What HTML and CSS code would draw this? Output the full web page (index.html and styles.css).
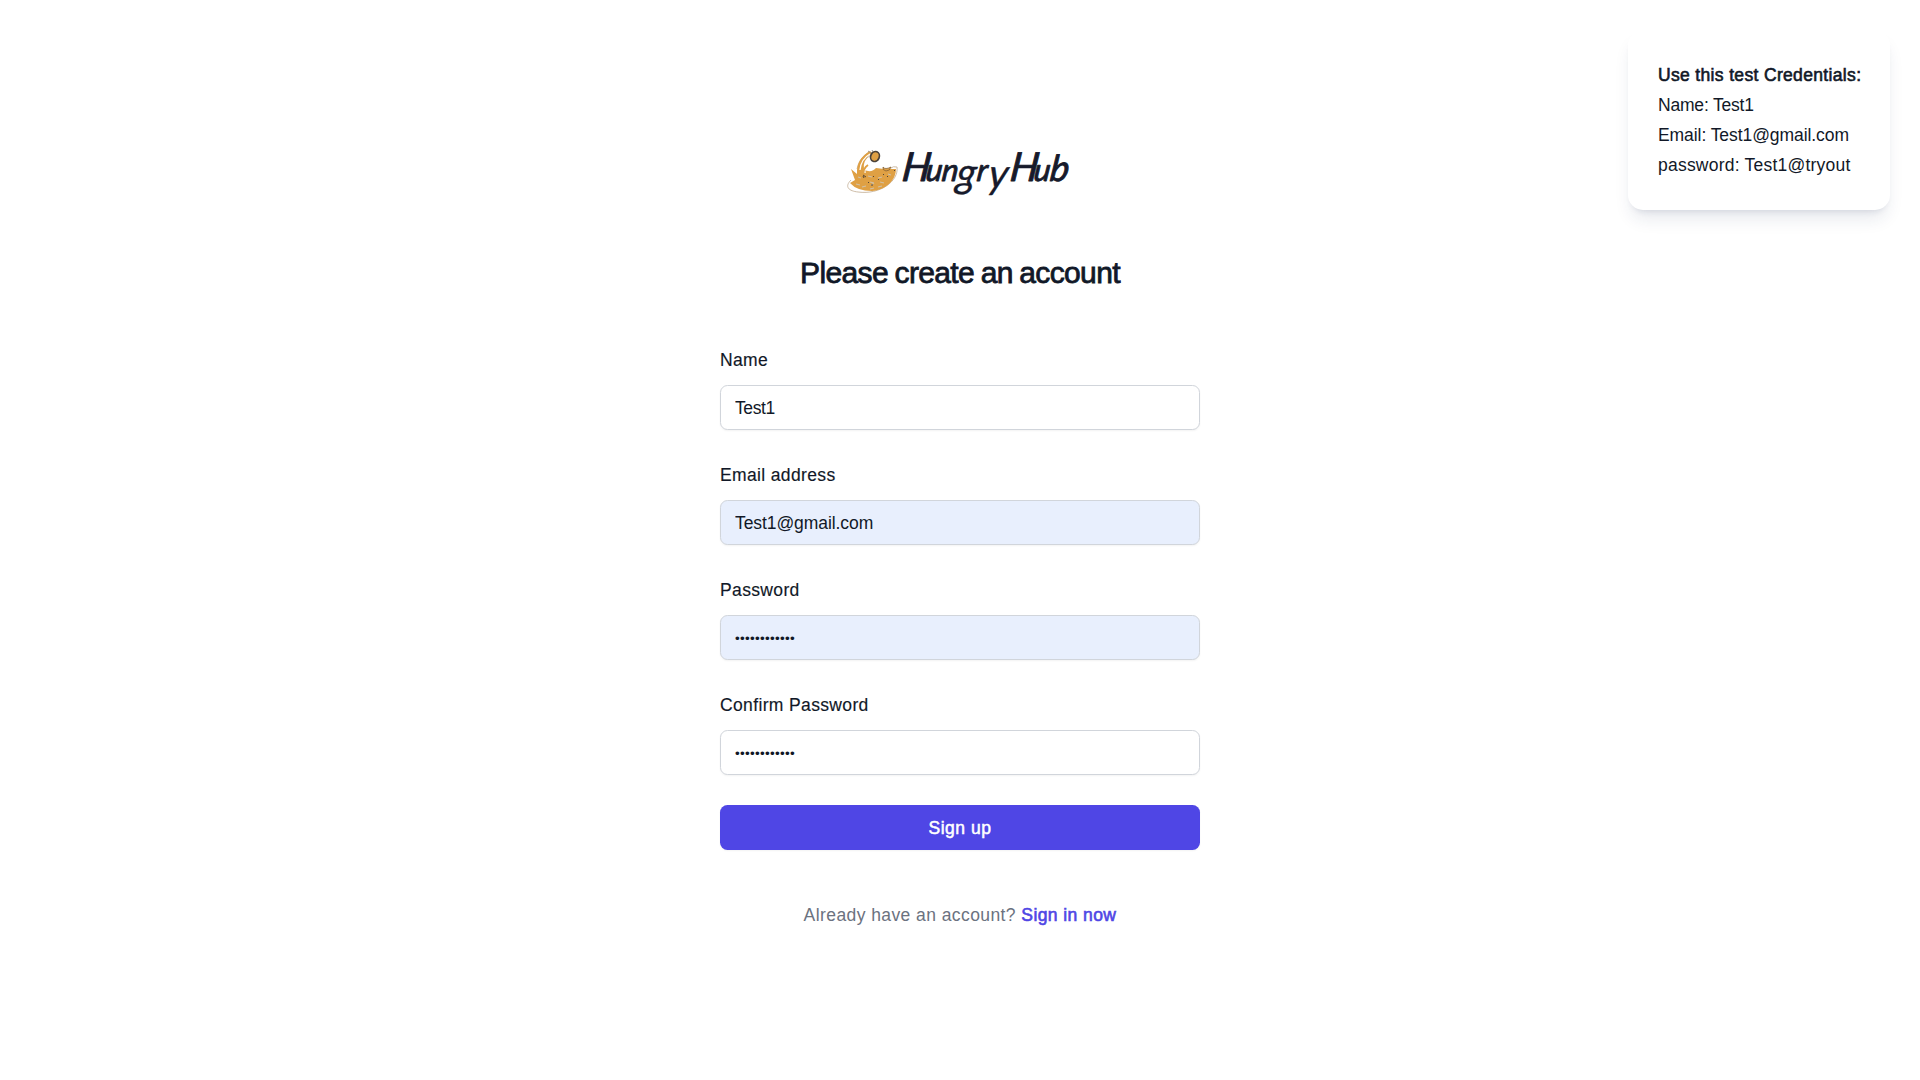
FILE: index.html
```html
<!DOCTYPE html>
<html lang="en">
<head>
<meta charset="utf-8">
<title>HungryHub</title>
<link rel="stylesheet" href="styles.css">
</head>
<body>
<main class="page">
  <svg class="logo" viewBox="840 140 240 70" role="img" aria-label="HungryHub">
    <g fill="none" stroke="#c7b49d" stroke-width=".9">
      <path d="M851 180C844 187 849 191 858 192C880 195 899 181 897 167Q893 166 891 168"/>
      <path d="M857 169Q859 158 869 152M861 171Q862 160 871 155"/>
    </g>
    <path fill="#dfa044" d="M851 169L857 174Q856 159 870 151L872 153Q862 160 864 170Q872 173 876 168L884 169L896 169C896 180 886 190 872 191Q857 191 850 183L855 180Z"/>
    <path d="M860 170Q861 159 870 154M865 173Q864 166 868 164" fill="none" stroke="#fff" stroke-width="1.3"/>
    <path d="M863 176Q863 168 868 165" fill="none" stroke="#dfa044" stroke-width="2"/>
    <path d="M883 167Q885 170 891 167Q890 171 886 171Q882 170 883 167Z" fill="#dfa044" stroke="#7b5a32" stroke-width=".7"/>
    <ellipse cx="875" cy="156.500" rx="4.300" ry="5.100" transform="rotate(22 875 156.500)" fill="#dfa044" stroke="#4c4238" stroke-width="1.700"/>
    <path d="M868 151l3 2m1-3l1 2" stroke="#958b7f" stroke-width=".9"/>
    <path d="M856 184l4 1m2 2l4-1m4 3l4-1m4-1l4-1m-11-1l3-2m6-1l4 1m-16-7l4 1m6 1l4-1m-24 0l3 1m27-4l3 1m-21 7l4 1" stroke="#d1c1a7" stroke-width="1.100"/>
    <path d="M863 175l3 2m7-1l1 1m9-3l1 1m-16 7l1 1m9-4l1 1m-8 5l2 0m14-9l1 1m-25-1l1 2m30-8l1 1" stroke="#514437" stroke-width="1"/>
    <g class="wordmark" transform="translate(0 181) skewX(-7)">
      <text><tspan class="tall" x="901">H</tspan><tspan x="925">u</tspan><tspan x="941">n</tspan><tspan class="tail" x="956" y="6">g</tspan><tspan x="976" y="0">r</tspan><tspan class="tail" x="988" y="7">y</tspan><tspan class="tall" x="1009" y="0">H</tspan><tspan x="1033">u</tspan><tspan class="b" x="1049">b</tspan></text>
    </g>
  </svg>
  <h1 class="title">Please create an account</h1>
  <form class="form">
    <label class="field"><span class="label name">Name</span><input class="input short" type="text" value="Test1"></label>
    <label class="field"><span class="label">Email address</span><input class="input filled" type="text" value="Test1@gmail.com"></label>
    <label class="field"><span class="label">Password</span><input class="input filled secret" type="password" value="Test1@tryout"></label>
    <label class="field"><span class="label">Confirm Password</span><input class="input secret" type="password" value="Test1@tryout"></label>
    <button class="submit" type="button">Sign up</button>
  </form>
  <p class="signin">Already have an account? <a class="link" href="#">Sign in now</a></p>
</main>
<aside class="credentials">
  <strong class="heading">Use this test Credentials:</strong>
  <span class="user">Name: Test1</span>
  <span class="email">Email: Test1@gmail.com</span>
  <span class="pass">password: Test1@tryout</span>
</aside>
</body>
</html>
```
FILE: styles.css
```css
* { box-sizing: border-box; }
body {
  margin: 0;
  background: #fff;
  color: #111827;
  font: 17.5px/30px "Liberation Sans", Arial, sans-serif;
}
.page {
  display: flex;
  flex-direction: column;
  align-items: center;
  width: 480px;
  margin: 0 auto;
  padding-top: 140px;
}
.logo { display: block; width: 240px; height: 70px; }
.wordmark { fill: #171a2b; stroke: #171a2b; stroke-width: .9px; stroke-linejoin: round; font: italic 31px Lato, sans-serif; }
.tall { font-size: 40px; }
.tail { font-size: 41px; stroke-width: .3px; }
.b { font-size: 36px; }
.title {
  margin: 40px 0 0;
  font-size: 30px;
  font-weight: 400;
  line-height: 45px;
  letter-spacing: -.63px;
  word-spacing: -1.2px;
  white-space: nowrap;
  -webkit-text-stroke: .8px;
}
.form { display: flex; flex-direction: column; gap: 30px; width: 100%; margin-top: 50px; }
.field { display: flex; flex-direction: column; gap: 10px; }
.label { letter-spacing: .36px; -webkit-text-stroke: .15px; }
.input {
  width: 100%;
  height: 45px;
  padding: 2px 14px 0;
  border: 1px solid #d1d5db;
  border-radius: 7.5px;
  outline: 0;
  background: #fff;
  box-shadow: 0 1px 2px rgba(0, 0, 0, .05);
  color: #111827;
  font: inherit;
  letter-spacing: -.08px;
}
.short { letter-spacing: -.4px; }
.filled { background: #e8effd; }
.secret { font-size: 13.5px; letter-spacing: .28px; padding-top: 1px; }
.submit {
  height: 45px;
  padding: 0;
  border: 0;
  border-radius: 7.5px;
  background: #4f46e5;
  box-shadow: 0 1px 2px rgba(0, 0, 0, .05);
  color: #fff;
  font: inherit;
  letter-spacing: .5px;
  -webkit-text-stroke: .5px;
}
.signin { margin: 50px 0 0; color: #6b7280; letter-spacing: .42px; white-space: nowrap; }
.link { color: #4f46e5; text-decoration: none; -webkit-text-stroke: .6px; }
.credentials {
  position: absolute;
  top: 30px;
  right: 30px;
  display: flex;
  flex-direction: column;
  width: 262px;
  padding: 30px;
  border-radius: 15px;
  background: #fff;
  box-shadow: 0 12px 18px -4px rgba(30, 41, 90, .11), 0 5px 7px -5px rgba(30, 41, 90, .16);
  white-space: nowrap;
}
.heading { font-weight: 400; letter-spacing: .34px; -webkit-text-stroke: .6px; }
.user { letter-spacing: -.2px; }
.email { letter-spacing: -.07px; }
.pass { letter-spacing: .22px; }
```
